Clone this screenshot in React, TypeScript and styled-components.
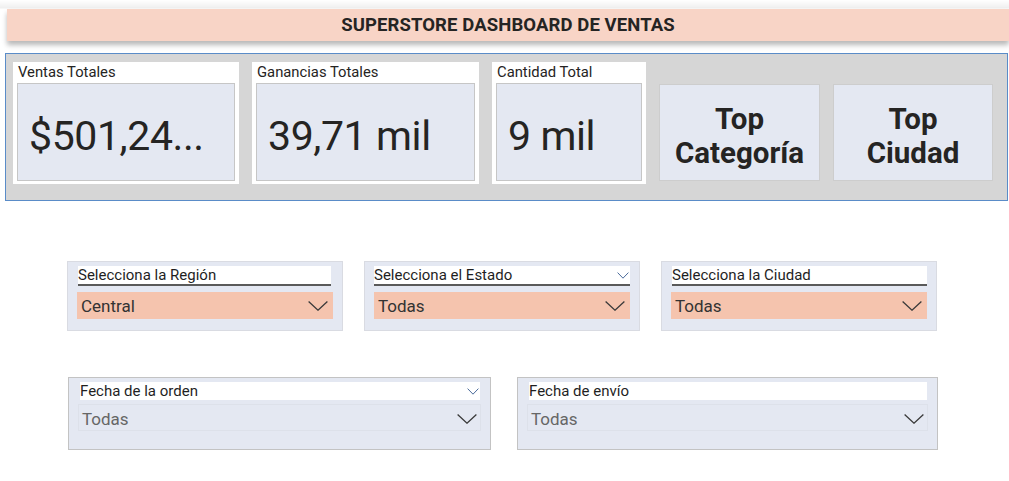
import styled, { createGlobalStyle } from "styled-components";

const GlobalStyle = createGlobalStyle`
    html, body {
        margin: 0;
        padding: 0;
        background: #ffffff;
    }
    body {
        font-family: Roboto, "Liberation Sans", sans-serif;
        color: #252423;
        overflow: hidden;
    }
`;

const Page = styled.div`
    width: 1009px;
    height: 481px;
    background: linear-gradient(#ffffff 0px, #efefef 8px, #ffffff 9px);
    padding-top: 9px;
    box-sizing: border-box;
`;

const Header = styled.div`
    margin-left: 7px;
    width: 1002px;
    height: 32px;
    background-color: #f8d4c6;
    box-shadow: 0 4px 5px rgba(0, 0, 0, 0.28);
    display: flex;
    align-items: center;
    justify-content: center;
`;

const Title = styled.h1`
    margin: 0;
    font-size: 18.5px;
    font-weight: 700;
    color: #252423;
    letter-spacing: 0.1px;
`;

const Panel = styled.div`
    margin: 12px 0 0 5px;
    width: 1003px;
    height: 148px;
    box-sizing: border-box;
    border: 1px solid #5a8cc8;
    background-color: #d6d6d6;
    padding: 8px 0 0 7px;
    display: flex;
    align-items: flex-start;
    gap: 13px;
`;

const Card = styled.div<{ $w: number }>`
    width: ${(p) => p.$w}px;
    height: 122px;
    box-sizing: border-box;
    background: #ffffff;
    padding: 0 4px 3px;
    display: flex;
    flex-direction: column;
`;

const CardTitle = styled.div`
    height: 18px;
    line-height: 20px;
    font-size: 14.8px;
    padding-left: 1px;
    margin-bottom: 3px;
    color: #252423;
`;

const ValueBox = styled.div`
    flex: 1;
    background: #e4e8f2;
    border: 1px solid #c6c6c6;
    display: flex;
    align-items: center;
    padding: 9px 0 0 11px;
    box-sizing: border-box;
`;

const Value = styled.span`
    font-size: 41px;
    line-height: 1;
    color: #252423;
    letter-spacing: -0.4px;
    white-space: nowrap;
`;

const TopBox = styled.div<{ $w: number }>`
    width: ${(p) => p.$w}px;
    height: 97px;
    margin-top: 22px;
    box-sizing: border-box;
    background: #e4e8f2;
    border: 1px solid #cdcdcd;
    display: flex;
    align-items: center;
    justify-content: center;
    text-align: center;
    font-size: 29.5px;
    font-weight: 700;
    line-height: 34px;
    color: #252423;
    padding-top: 6px;
`;

const Row = styled.div<{ $top: number; $left: number; $gap: number }>`
    display: flex;
    margin-top: ${(p) => p.$top}px;
    padding-left: ${(p) => p.$left}px;
    gap: ${(p) => p.$gap}px;
`;

const Slicer = styled.div<{ $w: number; $h: number; $border: string }>`
    width: ${(p) => p.$w}px;
    height: ${(p) => p.$h}px;
    box-sizing: border-box;
    background: #e4e8f2;
    border: 1px solid ${(p) => p.$border};
    padding: 4px 9px 0;
    display: flex;
    flex-direction: column;
`;

const SlicerHeader = styled.div<{ $underline?: boolean; $inset: string }>`
    height: 18px;
    margin: ${(p) => p.$inset};
    background: #ffffff;
    border-bottom: ${(p) => (p.$underline ? "2px solid #5a5a5a" : "none")};
    display: flex;
    align-items: center;
    justify-content: space-between;
    font-size: 15px;
    line-height: 18px;
    color: #1f1f1f;
    padding: 0 1px 0 0;
`;

const Dropdown = styled.div<{ $active?: boolean }>`
    height: 27px;
    margin-top: ${(p) => (p.$active ? "6px" : "4px")};
    box-sizing: border-box;
    background: ${(p) => (p.$active ? "#f5c4ae" : "transparent")};
    border: ${(p) => (p.$active ? "none" : "1px solid #dde1ea")};
    display: flex;
    align-items: center;
    justify-content: space-between;
    padding: ${(p) => (p.$active ? "0 5px 0 4px" : "2px 3px 0 3px")};
    font-size: 17px;
    color: ${(p) => (p.$active ? "#333333" : "#666666")};
`;

const Chevron = ({ size = "big" }: { size?: "big" | "small" }) => {
    const w = size === "big" ? 20 : 12;
    const h = size === "big" ? 10 : 7;
    return (
        <svg width={w} height={h} viewBox={`0 0 ${w} ${h}`} fill="none">
            <path
                d={`M0.6 0.6 L${w / 2} ${h - 0.8} L${w - 0.6} 0.6`}
                stroke={size === "big" ? "#3a3a3a" : "#4a6a9a"}
                strokeWidth={size === "big" ? 1.3 : 1}
            />
        </svg>
    );
};

export default function App() {
    return (
        <Page>
            <GlobalStyle />
            <Header>
                <Title>SUPERSTORE DASHBOARD DE VENTAS</Title>
            </Header>
            <Panel>
                <Card $w={226}>
                    <CardTitle>Ventas Totales</CardTitle>
                    <ValueBox>
                        <Value>$501,24...</Value>
                    </ValueBox>
                </Card>
                <Card $w={227}>
                    <CardTitle>Ganancias Totales</CardTitle>
                    <ValueBox>
                        <Value>39,71 mil</Value>
                    </ValueBox>
                </Card>
                <Card $w={154}>
                    <CardTitle>Cantidad Total</CardTitle>
                    <ValueBox>
                        <Value>9 mil</Value>
                    </ValueBox>
                </Card>
                <TopBox $w={161}>
                    Top
                    <br />
                    Categoría
                </TopBox>
                <TopBox $w={160}>
                    Top
                    <br />
                    Ciudad
                </TopBox>
            </Panel>

            <Row $top={60} $left={67} $gap={21}>
                <Slicer $w={276} $h={70} $border="#d9dbe2">
                    <SlicerHeader $underline $inset="0 2px 0 1px">Selecciona la Región</SlicerHeader>
                    <Dropdown $active>
                        Central
                        <Chevron />
                    </Dropdown>
                </Slicer>
                <Slicer $w={276} $h={70} $border="#d9dbe2">
                    <SlicerHeader $underline $inset="0 0 0 0">
                        Selecciona el Estado
                        <Chevron size="small" />
                    </SlicerHeader>
                    <Dropdown $active>
                        Todas
                        <Chevron />
                    </Dropdown>
                </Slicer>
                <Slicer $w={276} $h={70} $border="#d9dbe2">
                    <SlicerHeader $underline $inset="0 0 0 1px">Selecciona la Ciudad</SlicerHeader>
                    <Dropdown $active>
                        Todas
                        <Chevron />
                    </Dropdown>
                </Slicer>
            </Row>

            <Row $top={46} $left={68} $gap={26}>
                <Slicer $w={423} $h={73} $border="#c3c3c3">
                    <SlicerHeader $inset="0 1px 0 2px">
                        Fecha de la orden
                        <Chevron size="small" />
                    </SlicerHeader>
                    <Dropdown>
                        Todas
                        <Chevron />
                    </Dropdown>
                </Slicer>
                <Slicer $w={421} $h={73} $border="#c3c3c3">
                    <SlicerHeader $inset="0 1px 0 2px">Fecha de envío</SlicerHeader>
                    <Dropdown>
                        Todas
                        <Chevron />
                    </Dropdown>
                </Slicer>
            </Row>
        </Page>
    );
}
